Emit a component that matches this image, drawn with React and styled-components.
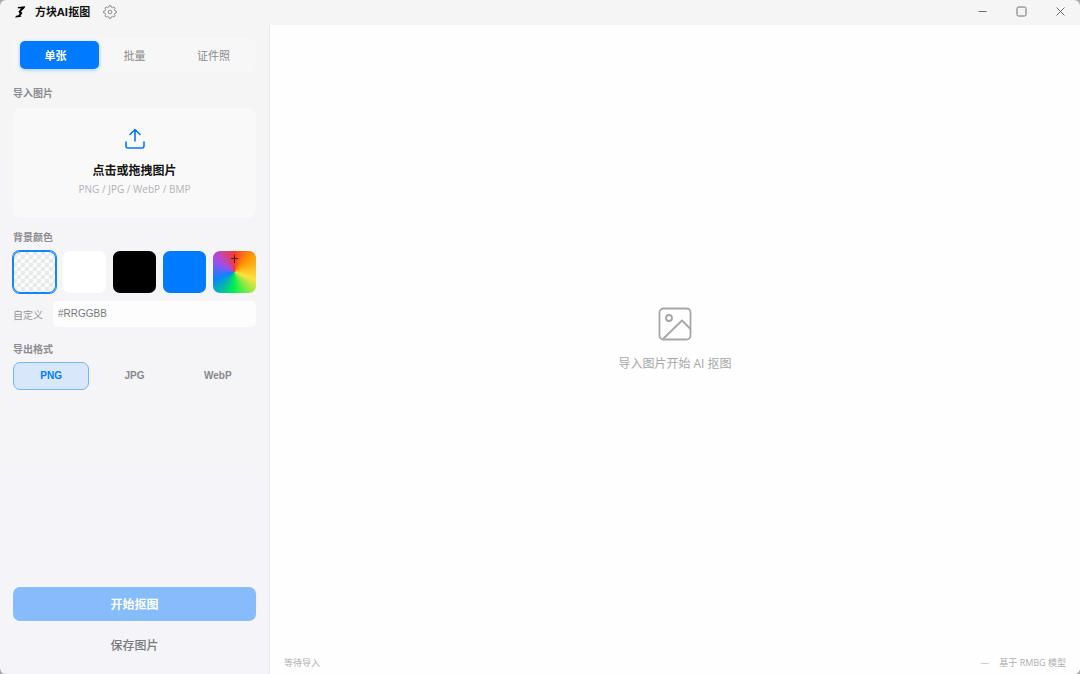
import React, { useState } from 'react';

import styled, { createGlobalStyle, css } from 'styled-components';

const GlobalStyle = createGlobalStyle`
  *, *::before, *::after {
    box-sizing: border-box;
  }

  body {
    margin: 0;
    background: #a9a9ab;
    font-family: "Open Sans", "Noto Sans CJK SC", sans-serif;
    font-size: 11px;
    color: #111;
  }

  button, input {
    margin: 0;
    padding: 0;
    border: none;
    background: none;
    font: inherit;
    color: inherit;
  }
`;

const Window = styled.div`
  display: flex;
  flex-direction: column;
  min-height: 100vh;
  border-radius: 6px;
  overflow: hidden;
  background: linear-gradient(#f5f5f5, #f5f5f7 30%, #f5f4f9);
`;

const TitleBar = styled.header`
  display: flex;
  align-items: center;
  height: 25px;
  padding: 0 0 2px 14px;
`;

const AppName = styled.h1`
  margin: 0 13px 0 9px;
  font-size: 11px;
  line-height: 16px;
  font-weight: bold;
`;

const IconButton = styled.button`
  display: flex;
  color: #858587;
`;

const WindowControls = styled.div`
  display: flex;
  margin-left: auto;
`;

const ControlButton = styled.button`
  display: flex;
  align-items: center;
  justify-content: center;
  width: 39px;
  height: 23px;
  color: #6c6c6c;
`;

const Body = styled.div`
  display: flex;
  flex: 1;
`;

const Sidebar = styled.aside`
  display: flex;
  flex-direction: column;
  flex: none;
  width: 270px;
  padding: 13px 13px 14px;
  border-right: 1px solid #e9e8ec;
`;

const Tabs = styled.div`
  position: relative;
  display: grid;
  grid-template-columns: repeat(3, 1fr);
  margin-bottom: 14px;
  padding: 3px;
  border-radius: 7px;
  background: #f7f7f7;
`;

const TabThumb = styled.div`
  position: absolute;
  top: 3px;
  left: 7px;
  width: calc((100% - 6px) / 3);
  height: 28px;
  border-radius: 5px;
  background: #007aff;
  box-shadow: 0 1px 4px rgba(0, 122, 255, 0.35);
  transform: translateX(${({ $index }) => $index * 100}%);
`;

const Tab = styled.button`
  position: relative;
  height: 28px;
  color: ${({ $active }) => ($active ? '#fff' : '#8a8a8c')};
  font-weight: ${({ $active }) => ($active ? 'bold' : 'normal')};
`;

const SectionTitle = styled.h2`
  margin: 0 0 ${({ $gap }) => $gap}px;
  font-size: 10px;
  line-height: 14px;
  font-weight: bold;
  color: #8c8c8f;
`;

const DropZone = styled.button`
  display: flex;
  flex-direction: column;
  align-items: center;
  margin-bottom: 12px;
  padding: 20px 0 21px;
  border-radius: 8px;
  background: #f9f9fa;
  color: #007aff;
`;

const DropTitle = styled.span`
  margin-top: 11px;
  font-size: 12px;
  line-height: 20px;
  font-weight: bold;
  color: #151515;
`;

const DropHint = styled.span`
  font-size: 10px;
  line-height: 16px;
  color: #b4b4b6;
`;

const Swatches = styled.div`
  display: grid;
  grid-template-columns: repeat(5, 1fr);
  gap: 7px;
`;

const Swatch = styled.button`
  display: flex;
  justify-content: center;
  height: 42px;
  border-radius: 7px;
  background: ${({ $fill }) => $fill};
  color: #5a1a10;
  ${({ $selected }) => $selected && css`
    box-shadow: 0 0 0 1px #1684fb, inset 0 0 0 1px #1684fb;
  `}
`;

const CustomColor = styled.div`
  display: flex;
  align-items: center;
  gap: 10px;
  margin: 8px 0 15px;
  font-size: 10px;
  color: #949497;
`;

const HexInput = styled.input`
  flex: 1;
  min-width: 0;
  height: 26px;
  padding: 0 5px 2px;
  border-radius: 5px;
  background: #fdfdfe;
  font-family: "Liberation Sans", sans-serif;

  &::placeholder {
    color: #77777a;
    opacity: 1;
  }
`;

const Formats = styled.div`
  display: grid;
  grid-template-columns: repeat(3, 1fr);
  gap: 7px;
`;

const FormatButton = styled.button`
  height: 28px;
  padding-bottom: 2px;
  border: 1px solid transparent;
  border-radius: 7px;
  font-family: "Liberation Sans", sans-serif;
  font-size: 10px;
  font-weight: bold;
  color: #88888b;
  ${({ $active }) => $active && css`
    border-color: #74b3fb;
    background: #d8e7f9;
    color: #007aff;
  `}
`;

const Actions = styled.div`
  display: flex;
  flex-direction: column;
  gap: 8px;
  margin-top: auto;
`;

const ActionButton = styled.button`
  height: ${({ $primary }) => ($primary ? 34 : 31)}px;
  border-radius: 7px;
  font-size: 12px;
  font-weight: ${({ $primary }) => ($primary ? 'bold' : 500)};
  color: ${({ $primary }) => ($primary ? '#fff' : '#79797c')};
  background: ${({ $primary }) => ($primary ? '#87bcfc' : 'transparent')};
`;

const Stage = styled.main`
  display: flex;
  flex-direction: column;
  flex: 1;
  min-width: 0;
  background: #fefefe;
`;

const EmptyState = styled.div`
  display: flex;
  flex: 1;
  flex-direction: column;
  align-items: center;
  justify-content: center;
  gap: 14px;
  padding-top: 2px;
  font-size: 12px;
  line-height: 18px;
  color: #a6a6a9;
`;

const StatusBar = styled.footer`
  display: flex;
  align-items: center;
  gap: 10px;
  height: 21px;
  padding: 0 14px 2px;
  font-size: 9px;
  color: #aeaeb1;
`;

const StatusText = styled.span`
  margin-right: auto;
`;

const Logo = () => (
  <svg width="12" height="14" viewBox="0 0 12 14" fill="#000" aria-hidden="true">
    <path d="M4 2 11.2 1.2 10.6 3 7 6.6 8.4 8 6.4 11 7.6 11.2 6.2 12 1 12.4 2.2 10.7 4.6 10.2 5.6 8.2 4.4 6.8 7 3.5 3.6 3.2Z" />
  </svg>
);

// outline of a cog: alternating outer and inner radii, rounded off by the line joins
const cogPath = Array.from({ length: 8 }, (_, i) => {
  const point = (radius, degrees) => {
    const angle = ((i * 45 + degrees) * Math.PI) / 180;
    return `${(12 + radius * Math.sin(angle)).toFixed(2)} ${(12 - radius * Math.cos(angle)).toFixed(2)}`;
  };
  return `${i ? 'L' : 'M'}${point(11, -8)} L${point(11, 8)} L${point(8.6, 15)} Q${point(8, 22.5)} ${point(8.6, 30)}`;
}).join(' ');

const GearIcon = () => (
  <svg width="14" height="14" viewBox="0 0 24 24" fill="none" stroke="currentColor" strokeWidth="1.6" strokeLinejoin="round">
    <path d={`${cogPath} Z`} />
    <circle cx="12" cy="12" r="3.2" />
  </svg>
);

const MinimizeIcon = () => (
  <svg width="11" height="11" fill="none" stroke="currentColor">
    <path d="M1.5 5.5h8" />
  </svg>
);

const MaximizeIcon = () => (
  <svg width="11" height="11" fill="none" stroke="currentColor">
    <rect x="1" y="1" width="9" height="9" rx="1.5" />
  </svg>
);

const CloseIcon = () => (
  <svg width="11" height="11" fill="none" stroke="currentColor">
    <path d="M1.5 1.5l8 8M9.5 1.5l-8 8" />
  </svg>
);

const UploadIcon = () => (
  <svg width="22" height="22" fill="none" stroke="currentColor" strokeWidth="1.6" strokeLinecap="round" strokeLinejoin="round">
    <path d="M11 13V2M6 6.5l5-5 5 5M2 14v4a2 2 0 0 0 2 2h14a2 2 0 0 0 2-2v-4" />
  </svg>
);

const ImageIcon = () => (
  <svg width="34" height="34" fill="none" stroke="currentColor" strokeWidth="1.8" strokeLinejoin="round">
    <rect x="1.5" y="1.5" width="31" height="31" rx="4" />
    <circle cx="11" cy="11" r="3" />
    <path d="M5 32 24 13.5 32.5 22" />
  </svg>
);

const PlusIcon = () => (
  <svg width="9" height="16" fill="none" stroke="currentColor">
    <path d="M4.5 4v8M1 7.5h7" />
  </svg>
);

const modes = ['单张', '批量', '证件照'];

const formats = ['PNG', 'JPG', 'WebP'];

const backgrounds = [
  { name: '透明', fill: 'repeating-conic-gradient(#e6e9ea 0% 25%, #fbfbfb 0% 50%) 0 0 / 8px 8px' },
  { name: '白色', fill: '#fff' },
  { name: '黑色', fill: '#000' },
  { name: '蓝色', fill: '#007aff' },
  {
    name: '取色',
    fill: 'conic-gradient(from 0deg at 50% 50%, #f43b30, #ff9500 45deg, #ffe23c 110deg, #00f24c 180deg, #0a84ff 250deg, #a84be8 305deg, #f43b30)',
    custom: true,
  },
];

const App = () => {
  const [mode, setMode] = useState(0);
  const [background, setBackground] = useState(0);
  const [format, setFormat] = useState('PNG');
  const [hex, setHex] = useState('');

  return (
    <>
      <GlobalStyle />
      <Window>
        <TitleBar>
          <Logo />
          <AppName>方块AI抠图</AppName>
          <IconButton type="button" aria-label="设置"><GearIcon /></IconButton>
          <WindowControls>
            <ControlButton type="button" aria-label="最小化"><MinimizeIcon /></ControlButton>
            <ControlButton type="button" aria-label="最大化"><MaximizeIcon /></ControlButton>
            <ControlButton type="button" aria-label="关闭"><CloseIcon /></ControlButton>
          </WindowControls>
        </TitleBar>
        <Body>
          <Sidebar>
            <Tabs>
              <TabThumb $index={mode} />
              {modes.map((name, index) => (
                <Tab key={name} type="button" $active={index === mode} onClick={() => setMode(index)}>
                  {name}
                </Tab>
              ))}
            </Tabs>

            <SectionTitle $gap={8}>导入图片</SectionTitle>
            <DropZone type="button">
              <UploadIcon />
              <DropTitle>点击或拖拽图片</DropTitle>
              <DropHint>PNG / JPG / WebP / BMP</DropHint>
            </DropZone>

            <SectionTitle $gap={7}>背景颜色</SectionTitle>
            <Swatches>
              {backgrounds.map(({ name, fill, custom }, index) => (
                <Swatch
                  key={name}
                  type="button"
                  aria-label={name}
                  $fill={fill}
                  $selected={index === background}
                  onClick={() => setBackground(index)}
                >
                  {custom && <PlusIcon />}
                </Swatch>
              ))}
            </Swatches>
            <CustomColor>
              <label htmlFor="hex">自定义</label>
              <HexInput id="hex" placeholder="#RRGGBB" value={hex} onChange={e => setHex(e.target.value)} />
            </CustomColor>

            <SectionTitle $gap={6}>导出格式</SectionTitle>
            <Formats>
              {formats.map(name => (
                <FormatButton key={name} type="button" $active={name === format} onClick={() => setFormat(name)}>
                  {name}
                </FormatButton>
              ))}
            </Formats>

            <Actions>
              <ActionButton type="button" $primary>开始抠图</ActionButton>
              <ActionButton type="button">保存图片</ActionButton>
            </Actions>
          </Sidebar>
          <Stage>
            <EmptyState>
              <ImageIcon />
              <span>导入图片开始 AI 抠图</span>
            </EmptyState>
            <StatusBar>
              <StatusText>等待导入</StatusText>
              <span>—</span>
              <span>基于 RMBG 模型</span>
            </StatusBar>
          </Stage>
        </Body>
      </Window>
    </>
  );
};

export default App;
